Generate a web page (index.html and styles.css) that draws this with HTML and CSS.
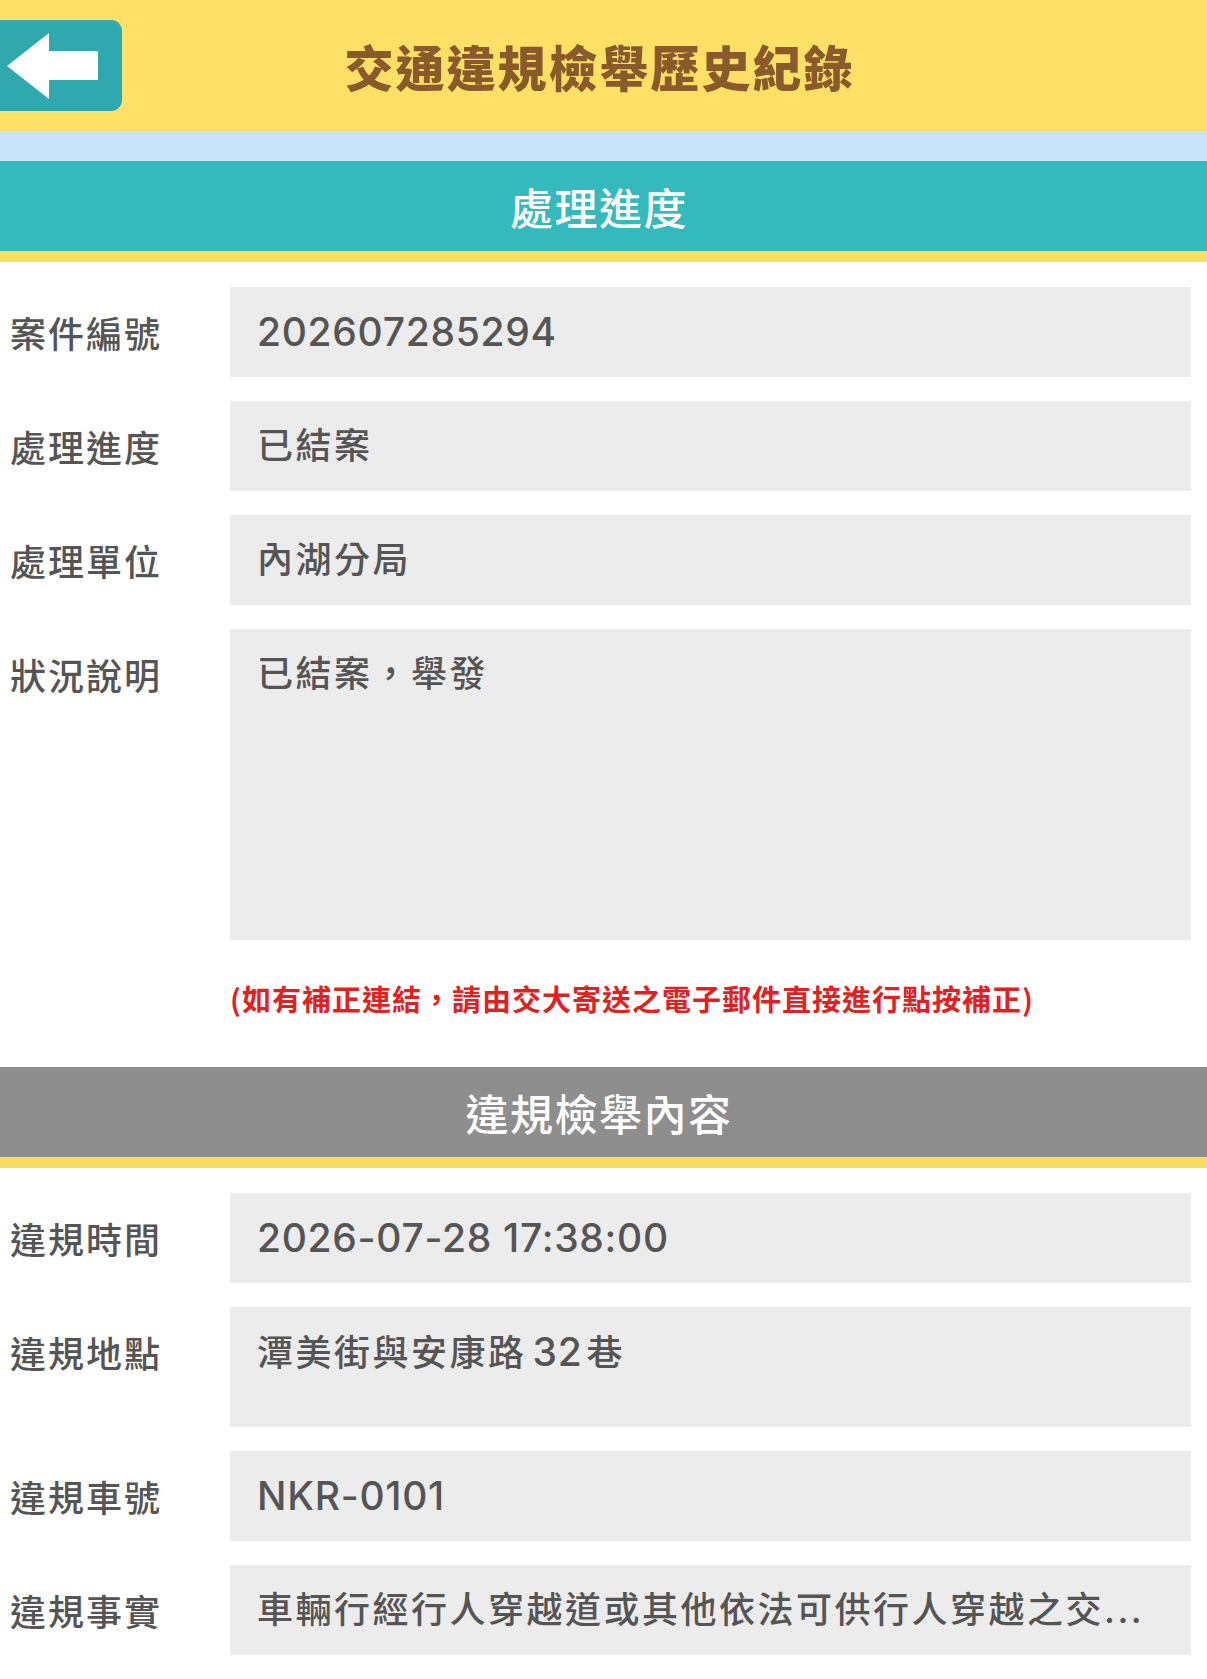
FILE: index.html
```html
<!DOCTYPE html>
<html lang="zh-Hant">
<head>
<meta charset="utf-8">
<title>交通違規檢舉歷史紀錄</title>
<link rel="stylesheet" href="styles.css">
</head>
<body>
<header class="topbar">
  <a class="back-btn" href="#" aria-label="返回">
    <svg class="back-icon" viewBox="0 0 122 91" width="122" height="91"><polygon points="7,46 49,13 49,31 98,31 98,60 49,60 49,79" fill="#fff"/></svg>
  </a>
  <h1 class="title">交通違規檢舉歷史紀錄</h1>
  <span class="spacer"></span>
</header>
<div class="band"></div>

<section class="section">
  <h2 class="section-head section-head--teal">處理進度</h2>
  <div class="fields">
    <div class="label">案件編號</div><div class="value value--latin">202607285294</div>
    <div class="label">處理進度</div><div class="value">已結案</div>
    <div class="label">處理單位</div><div class="value">內湖分局</div>
    <div class="label">狀況說明</div><div class="value value--tall">已結案，舉發</div>
  </div>
  <p class="note">(如有補正連結，請由交大寄送之電子郵件直接進行點按補正)</p>
</section>

<section class="section">
  <h2 class="section-head section-head--gray">違規檢舉內容</h2>
  <div class="fields fields--last">
    <div class="label">違規時間</div><div class="value value--latin">2026-07-28 17:38:00</div>
    <div class="label">違規地點</div><div class="value value--mid">潭美街與安康路<span class="num">32</span>巷</div>
    <div class="label">違規車號</div><div class="value value--latin">NKR-0101</div>
    <div class="label">違規事實</div><div class="value">車輛行經行人穿越道或其他依法可供行人穿越之交...</div>
  </div>
</section>
</body>
</html>
```

FILE: styles.css
```css
* { box-sizing: border-box; }
html, body { margin: 0; padding: 0; background: #ffffff; }
body {
  font-family: "Noto Sans CJK TC", "Noto Sans", sans-serif;
  color: #555555;
  width: 1207px;
}
.topbar {
  height: 131px;
  background: #fee067;
  display: grid;
  grid-template-columns: 122px 1fr 122px;
  align-items: center;
  padding-right: 8px;
}
.back-btn {
  display: block;
  width: 122px;
  height: 91px;
  background: #2fa9ae;
  border-radius: 0 11px 11px 0;
}
.back-icon { display: block; }
.title {
  margin: 0;
  text-align: center;
  font-size: 49px;
  font-weight: 900;
  letter-spacing: 2px;
  color: #8b5a2b;
  line-height: 1;
}
.band { height: 30px; background: #c9e4f9; }
.section-head {
  margin: 0;
  height: 101px;
  line-height: 90px;
  text-align: center;
  color: #ffffff;
  font-size: 43px;
  font-weight: 500;
  letter-spacing: 1.5px;
  padding-right: 9px;
  border-bottom: 11px solid #f8dd63;
}
.section-head--teal { background: #34b9bc; }
.section-head--gray { background: #8e8e8e; }
.fields {
  display: grid;
  grid-template-columns: 220px 1fr;
  row-gap: 24px;
  padding: 25px 16px 0 10px;
}
.fields--last { padding-bottom: 22px; }
.label {
  font-size: 36px;
  font-weight: 500;
  line-height: 90px;
  letter-spacing: 2px;
  color: #555555;
}
.value {
  background: #ececec;
  height: 90px;
  padding: 0 27px;
  font-family: "Inter", "Noto Sans CJK TC", sans-serif;
  font-size: 36px;
  font-weight: 500;
  line-height: 90px;
  letter-spacing: 2.5px;
  color: #555555;
  white-space: nowrap;
  overflow: hidden;
}
.value--latin {
  font-size: 39px;
  letter-spacing: 0.7px;
}
.value--tall { height: 311px; }
.value--mid { height: 120px; }
.num {
  font-size: 39px;
  letter-spacing: 0.7px;
  padding: 0 4px 0 6px;
}
.note {
  margin: 38px 0 49px 230px;
  line-height: 40px;
  font-size: 29px;
  font-weight: 700;
  letter-spacing: 1px;
  color: #e31f1f;
}
```
